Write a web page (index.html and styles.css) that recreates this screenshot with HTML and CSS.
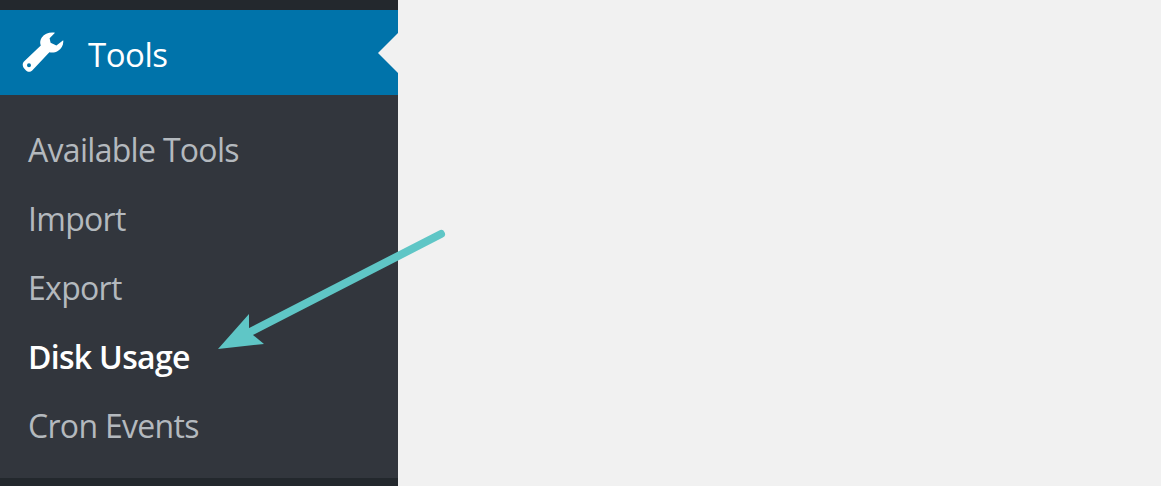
FILE: index.html
```html
<!DOCTYPE html>
<html lang="en">
<head>
    <meta charset="UTF-8">
    <title>Tools</title>
    <link rel="stylesheet" href="styles.css">
</head>
<body>
    <!-- admin sidebar -->
    <aside class="sidebar">
        <div class="menu-current">
            <svg class="wrench" viewBox="22 32 42 41" aria-hidden="true">
                <path fill-rule="evenodd" d="M55 32.7C50 31.8 44.5 33.5 41.8 37.5C40 40.2 39.8 43 40.8 45.6L24 61.4C22.4 63 22.3 65.8 23.6 67.8L26 70.4C27.8 72.2 30.6 72 32.2 70.4L49.4 52.2C52 53 55.2 52.6 57.8 51C61.6 48.6 63.8 44.6 63.2 40.2L56.4 45.4L50.6 42.8L49.6 38.2ZM29 63.2A2 2 0 1 1 29 67.2A2 2 0 1 1 29 63.2Z"/>
            </svg>
            <span class="menu-name">Tools</span>
        </div>
        <ul class="submenu">
            <li><a href="#">Available Tools</a></li>
            <li><a href="#">Import</a></li>
            <li><a href="#">Export</a></li>
            <li><a href="#" class="current">Disk Usage</a></li>
            <li><a href="#">Cron Events</a></li>
        </ul>
    </aside>

    <!-- arrow drawn over the screenshot -->
    <svg class="arrow" viewBox="0 0 1161 486" aria-hidden="true">
        <line x1="441" y1="234" x2="250" y2="332" stroke="#5fc6c6" stroke-width="8" stroke-linecap="round"/>
        <polygon points="218,349 249,314 249,328 253,335 264,344" fill="#5fc6c6"/>
    </svg>
</body>
</html>
```

FILE: styles.css
```css
* {
    margin: 0;
    padding: 0;
    box-sizing: border-box;
}

html, body {
    height: 100%;
}

body {
    background-color: #f1f1f1;
    font-family: "Open Sans", "Noto Sans", sans-serif;
    overflow: hidden;
}

.sidebar {
    width: 398px;
    height: 486px;
    background-color: #23282d;
    padding: 10px 0 8px;
    display: flex;
    flex-direction: column;
}

/* current menu item */
.menu-current {
    position: relative;
    height: 85px;
    flex-shrink: 0;
    background-color: #0073aa;
    color: white;
    display: flex;
    align-items: center;
    padding-left: 22px;
    gap: 24px;
}

.menu-current::after {
    content: "";
    position: absolute;
    right: 0;
    top: 23px;
    border: 20px solid transparent;
    border-right-color: #f1f1f1;
    border-left-width: 0;
}

.wrench {
    width: 42px;
    height: 41px;
    fill: white;
    margin-top: -1px;
}

.menu-name {
    font-size: 33px;
    letter-spacing: -0.5px;
    margin-top: 3px;
}

/* submenu */
.submenu {
    flex: 1;
    list-style: none;
    background-color: #32363d;
    padding: 20px 0 18px;
}

.submenu li {
    height: 69px;
    display: flex;
    align-items: center;
    padding-left: 28px;
}

.submenu a {
    color: #b4b9be;
    text-decoration: none;
    font-size: 32px;
    letter-spacing: -0.7px;
}

.submenu a.current {
    color: white;
    font-weight: 600;
}

.arrow {
    position: absolute;
    left: 0;
    top: 0;
    width: 1161px;
    height: 486px;
}
```
